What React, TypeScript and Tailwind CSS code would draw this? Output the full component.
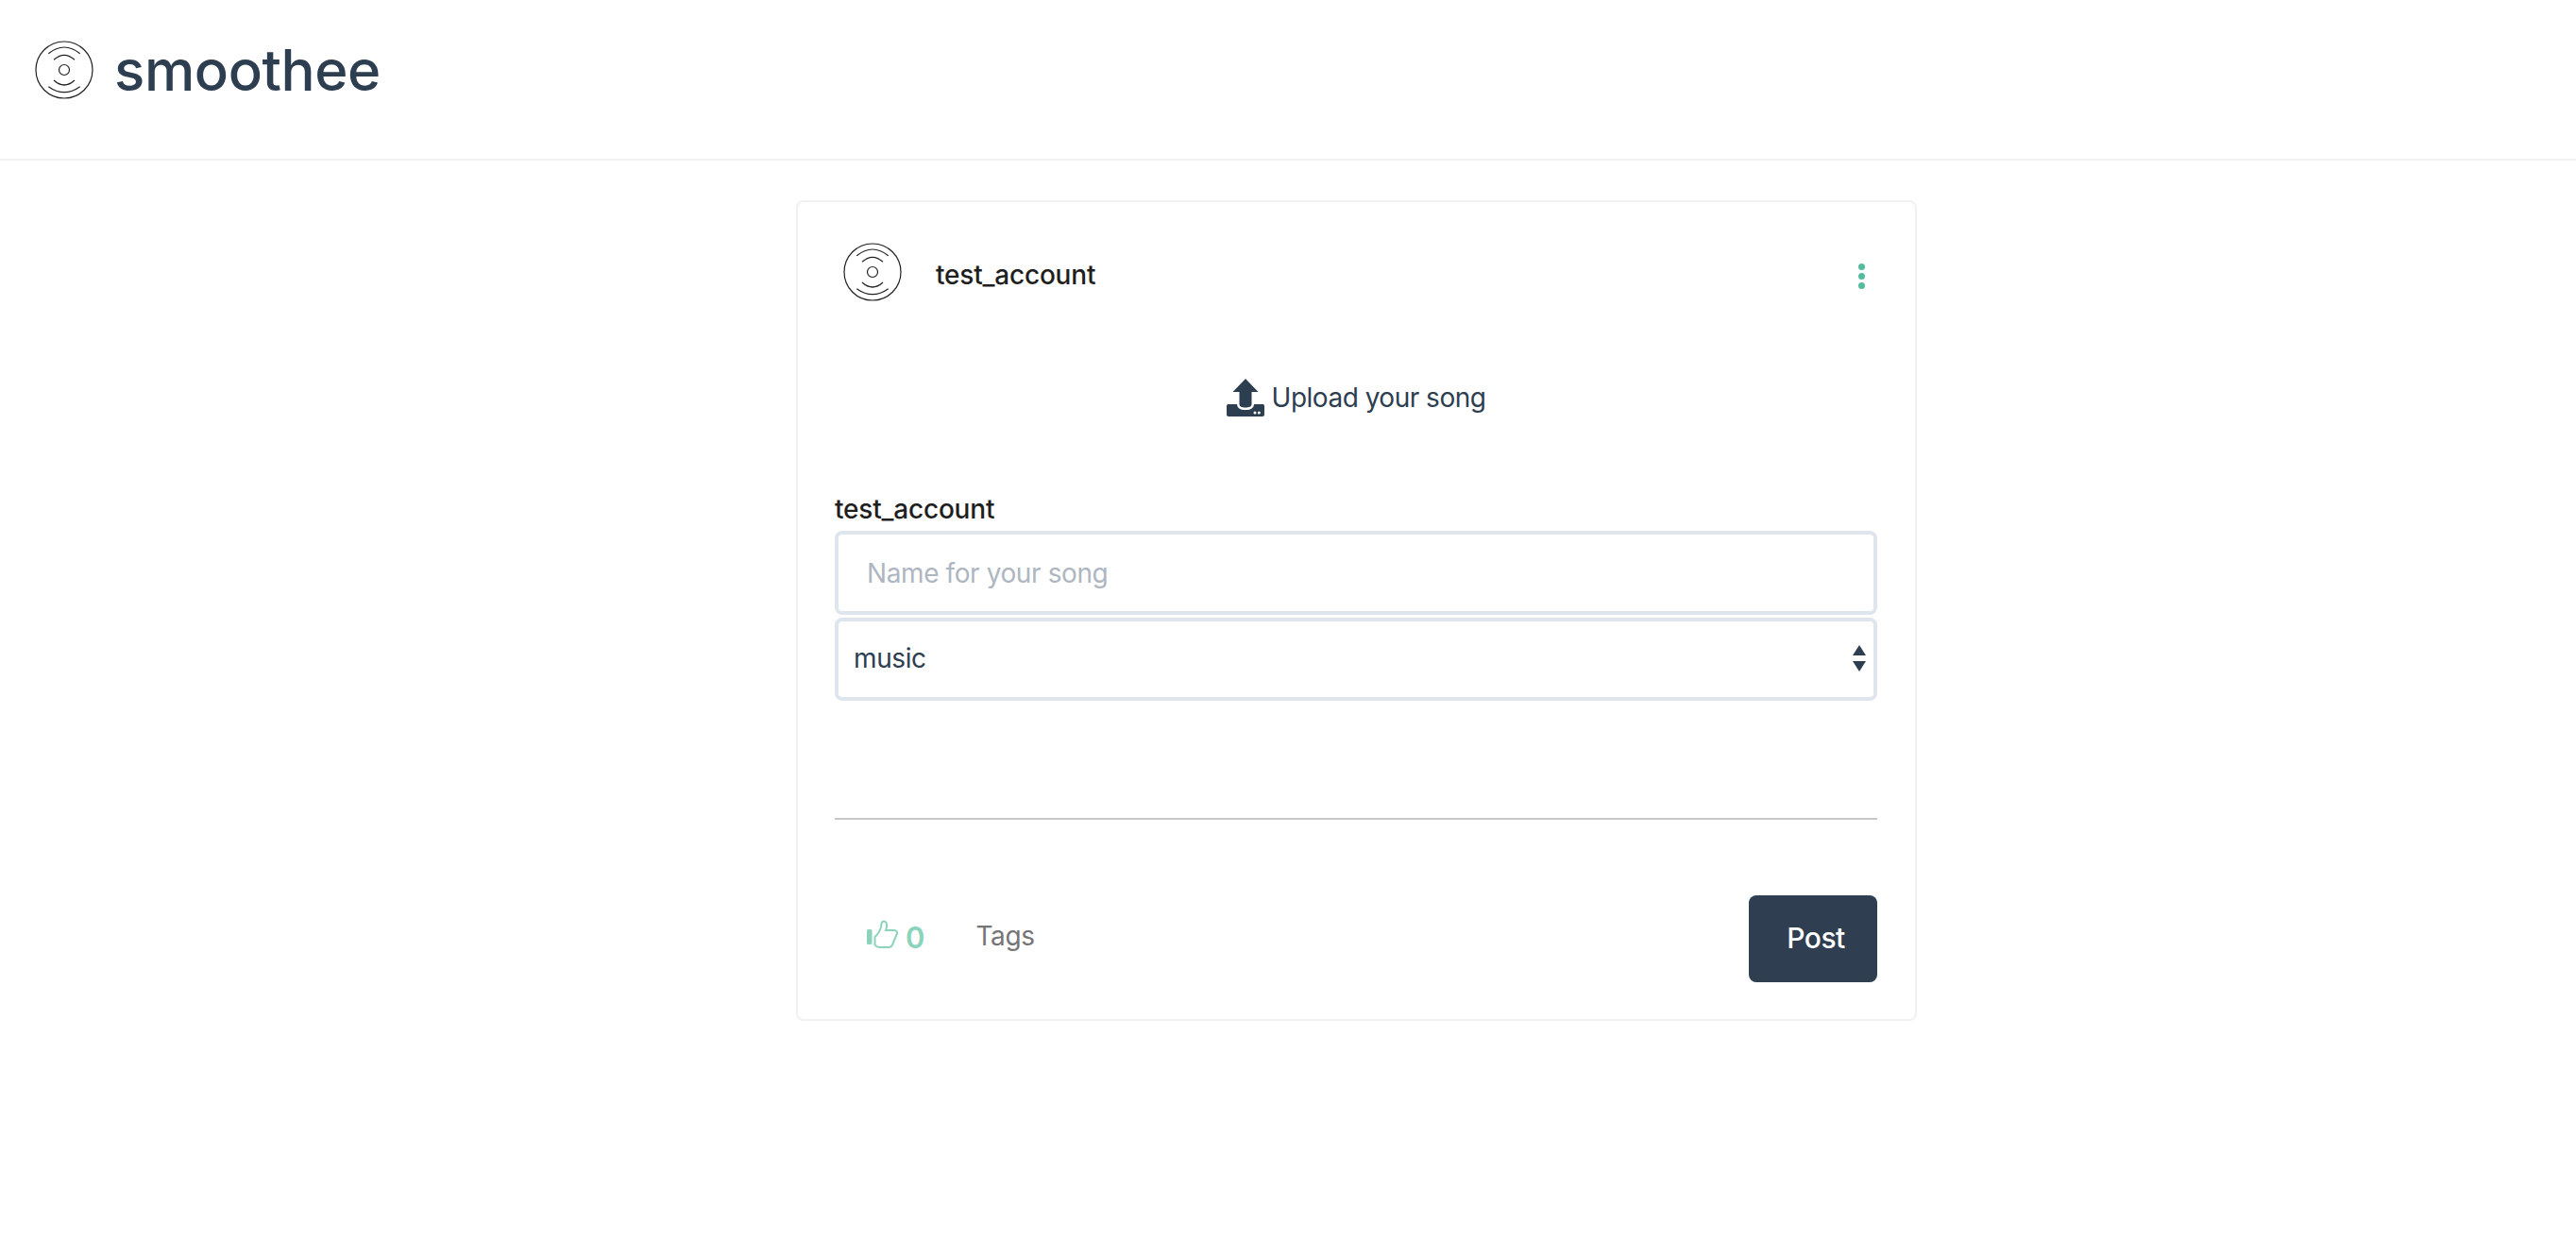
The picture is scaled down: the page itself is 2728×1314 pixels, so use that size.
function DiscLogo() {
  return (
    <svg width="62" height="62" viewBox="0 0 62 62" fill="none" stroke="#222" strokeWidth="1.2" className="shrink-0">
      <circle cx="31" cy="31" r="30" />
      <circle cx="31" cy="31" r="5.5" />
      <path d="M14.3 13.7 Q31 0.3 47.7 13.7" />
      <path d="M20 20.3 Q31 10.3 42 20.3" />
      <path d="M20 42 Q31 52 42 42" />
      <path d="M14.3 48.7 Q31 60.7 47.7 48.7" />
    </svg>
  )
}

function UploadIcon() {
  return (
    <svg width="40" height="40" viewBox="0 0 40 40" className="shrink-0">
      <path d="M20 0 L33.5 14 H26.5 V27 C26.5 29.5 24 30.5 20 30.5 C16 30.5 13.5 29.5 13.5 27 V14 H6.5 Z" fill="#2d3e50" />
      <path d="M0 29 C0 27.5 1 27 2 27 H11 C11.5 31 14 33 20 33 C26 33 28.5 31 29 27 H38 C39 27 40 27.5 40 29 V38 C40 39 39 40 38 40 H2 C1 40 0 39 0 38 Z" fill="#2d3e50" />
      <circle cx="30" cy="36" r="1.5" fill="#fff" />
      <circle cx="34.3" cy="36" r="1.5" fill="#fff" />
    </svg>
  )
}

function ThumbIcon() {
  return (
    <svg width="33" height="30" viewBox="0 0 33 30" className="shrink-0 mb-[10px]">
      <rect x="0" y="10" width="5.5" height="16" rx="1.5" fill="#8cd3bc" />
      <path
        d="M8.5 18 C12 15 15 11 15.5 4 C16 1 19 0.5 20.5 3 C22 6 21 8 20 11 H29 C31.5 11 32.5 13 31.8 15 L27 26.5 C26 28.5 25 29 23 29 H13 C11 29 10 28 8.5 26.5 Z"
        fill="none"
        stroke="#8cd3bc"
        strokeWidth="2"
      />
    </svg>
  )
}

export default function App() {
  return (
    <div className="min-h-[1314px] bg-white font-['Inter','Liberation_Sans',sans-serif]">
      <header className="h-[170px] border-b-2 border-[#f1f1f1] flex items-start pl-[37px] pt-[43px] gap-[22px]">
        <DiscLogo />
        <span className="text-[60px] leading-[62px] font-medium text-[#2d3e50] tracking-[-0.4px]">smoothee</span>
      </header>

      <main className="pl-[843px] pt-[42px]">
        <div className="w-[1187px] h-[869px] border-2 border-[#f1f1f1] rounded-lg pt-[43px] pl-[39px] pr-[40px]">
          <div className="flex items-start pl-[9px] pr-[13px]">
            <DiscLogo />
            <span className="ml-[36px] mt-[14px] text-[28px] leading-[40px] font-medium text-[#1f1f1f] tracking-[-0.2px]">test_account</span>
            <div className="ml-auto mt-[22px] flex flex-col gap-[3px]">
              <span className="w-[7px] h-[7px] rounded-full bg-[#55bb9e]" />
              <span className="w-[7px] h-[7px] rounded-full bg-[#55bb9e]" />
              <span className="w-[7px] h-[7px] rounded-full bg-[#55bb9e]" />
            </div>
          </div>

          <div className="flex justify-center items-center gap-[8px] mt-[82px]">
            <UploadIcon />
            <span className="text-[28px] leading-[40px] text-[#2d3e50] tracking-[-0.5px]">Upload your song</span>
          </div>

          <div className="mt-[80px] text-[28px] leading-[36px] font-medium text-[#1f1f1f] tracking-[-0.2px]">test_account</div>
          <input
            placeholder="Name for your song"
            className="mt-[5px] block w-full h-[89px] border-4 border-[#dee5ec] rounded-lg px-[30px] text-[28px] outline-none tracking-[-0.4px] placeholder:text-[#aeb6c1]"
          />
          <div className="relative mt-[3px]">
            <select className="block w-full h-[88px] border-4 border-[#dee5ec] rounded-lg pl-[16px] pb-[2px] text-[28px] text-[#2d3e50] bg-white appearance-none outline-none tracking-[-0.4px]">
              <option>music</option>
            </select>
            <svg width="14" height="28" viewBox="0 0 14 28" className="absolute right-[12px] top-[29px]" fill="#2d3e50">
              <path d="M7 0 L14 11 H0 Z" />
              <path d="M0 17 H14 L7 28 Z" />
            </svg>
          </div>

          <div className="mt-[124px] h-[2px] bg-[#c8c8c8]" />

          <div className="mt-[80px] flex items-center">
            <div className="flex items-center pl-[34px] gap-[8px] text-[#8cd3bc]">
              <ThumbIcon />
              <span className="text-[31px] leading-[40px] font-semibold mb-[3px]">0</span>
            </div>
            <span className="ml-[54px] text-[28px] leading-[36px] text-[#757575] tracking-[-0.4px] mb-[6px]">Tags</span>
            <button className="ml-auto w-[136px] h-[92px] pl-[6px] pb-[2px] bg-[#2f3e50] rounded-lg text-white text-[30px] font-medium tracking-[-0.5px]">Post</button>
          </div>
        </div>
      </main>
    </div>
  )
}
